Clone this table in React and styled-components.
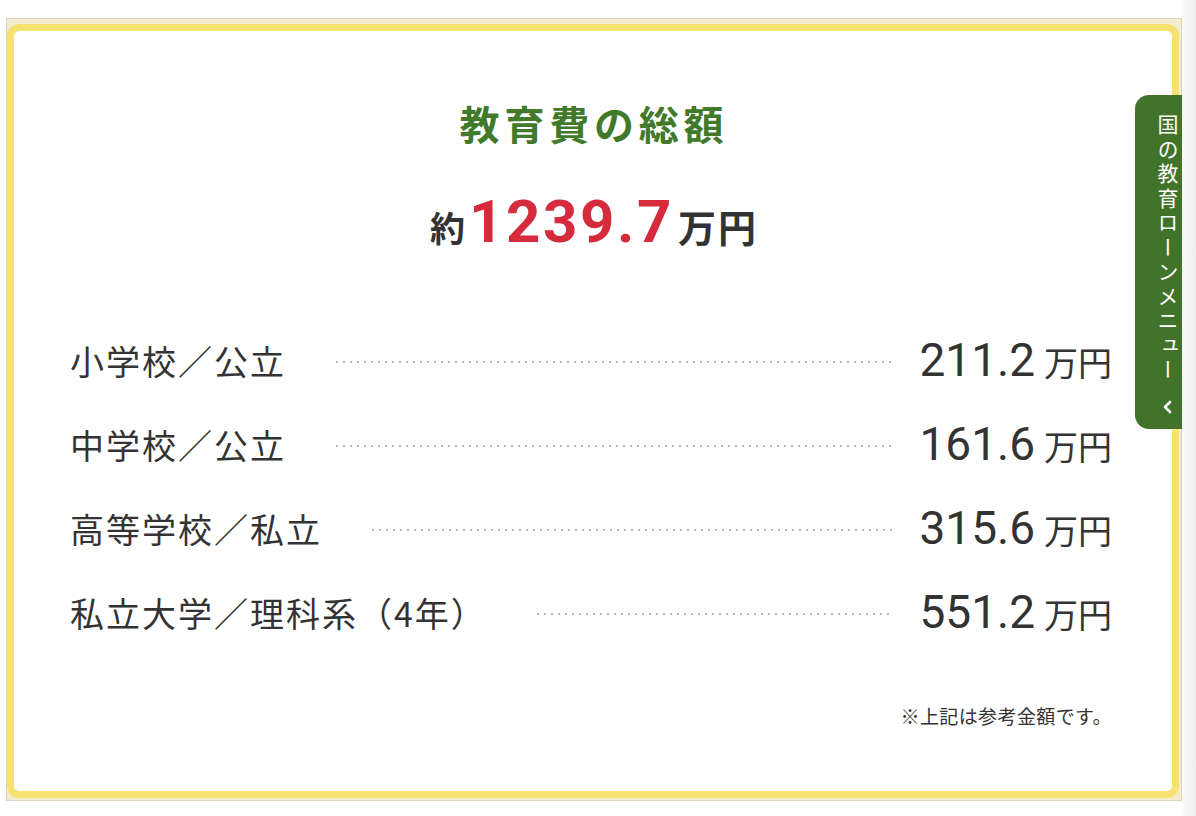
import styled, { createGlobalStyle } from 'styled-components';

const GlobalStyle = createGlobalStyle`
  body {
    margin: 0;
    background: #fff;
    font-family: "Noto Sans CJK JP", "Noto Sans", sans-serif;
    color: #333;
  }
`;

const Page = styled.div`
  display: flex;
  height: 816px;
  position: relative;
  overflow: hidden;
`;

const Main = styled.div`
  flex: 1;
  padding: 18px 0 0 6px;
`;

const Shade = styled.div`
  width: 14px;
  background: linear-gradient(to right, #fbfbfb, #ececec);
`;

const Frame = styled.div`
  box-sizing: border-box;
  width: 1176px;
  height: 783px;
  border: 1px solid #dcd3bb;
  background: #f4ecce;
  padding: 5px 2px 2px 0;
`;

const Card = styled.div`
  box-sizing: border-box;
  height: 100%;
  border: 7px solid #f7e170;
  border-radius: 12px;
  background: #fff;
  padding: 72px 60px 0 56px;
`;

const Title = styled.h2`
  margin: 0;
  padding-left: 6px;
  text-align: center;
  font-size: 40px;
  line-height: 1;
  font-weight: 700;
  letter-spacing: 0.12em;
  color: #417a2b;
`;

const Total = styled.div`
  margin-top: 49px;
  padding-left: 6px;
  display: flex;
  justify-content: center;
  align-items: baseline;
  line-height: 1;
  font-weight: 700;
  color: #333;
`;

const TotalUnit = styled.span`
  font-size: ${(p) => p.$size || 35}px;
  letter-spacing: 2px;
`;

const TotalNumber = styled.span`
  font-family: Roboto, "Liberation Sans", sans-serif;
  font-size: 60px;
  letter-spacing: 2.6px;
  color: #d52b3c;
  margin: 0 4px 0 2px;
`;

const List = styled.div`
  margin-top: 66px;
  display: flex;
  flex-direction: column;
`;

const Row = styled.div`
  height: 84px;
  display: flex;
  align-items: center;
`;

const Label = styled.span`
  font-size: 34px;
  letter-spacing: 2px;
  color: #333;
  white-space: nowrap;
`;

const Dots = styled.span`
  flex: 1;
  height: 2px;
  margin: 4px 27px 0 50px;
  background: repeating-linear-gradient(
    to right,
    #b8b8b8 0 2px,
    transparent 2px 7px
  );
`;

const Value = styled.span`
  display: flex;
  align-items: baseline;
  white-space: nowrap;
`;

const Amount = styled.span`
  font-family: Roboto, "Liberation Sans", sans-serif;
  font-size: 46px;
  color: #333;
`;

const Unit = styled.span`
  font-size: 34px;
  margin-left: 9px;
  color: #333;
`;

const Note = styled.p`
  margin: 48px 0 0;
  text-align: right;
  font-size: 19px;
  letter-spacing: 0.4px;
  color: #333;
`;

const Tab = styled.div`
  position: absolute;
  top: 95px;
  right: 14px;
  box-sizing: border-box;
  width: 47px;
  height: 334px;
  padding: 19px 0 0 22px;
  background: #41732b;
  border-radius: 14px 0 0 14px;
  display: flex;
  flex-direction: column;
  align-items: flex-start;
`;

const TabText = styled.span`
  writing-mode: vertical-rl;
  font-size: 21px;
  letter-spacing: 3.5px;
  line-height: 1;
  color: #fff;
`;

const rows = [
  { label: '小学校／公立', value: '211.2' },
  { label: '中学校／公立', value: '161.6' },
  { label: '高等学校／私立', value: '315.6' },
  { label: '私立大学／理科系（4年）', value: '551.2' },
];

export default function App() {
  return (
    <Page>
      <GlobalStyle />
      <Main>
        <Frame>
          <Card>
            <Title>教育費の総額</Title>
            <Total>
              <TotalUnit>約</TotalUnit>
              <TotalNumber>1239.7</TotalNumber>
              <TotalUnit $size={38}>万円</TotalUnit>
            </Total>
            <List>
              {rows.map((r) => (
                <Row key={r.label}>
                  <Label>{r.label}</Label>
                  <Dots />
                  <Value>
                    <Amount>{r.value}</Amount>
                    <Unit>万円</Unit>
                  </Value>
                </Row>
              ))}
            </List>
            <Note>※上記は参考金額です。</Note>
          </Card>
        </Frame>
      </Main>
      <Shade />
      <Tab>
        <TabText>国の教育ローンメニュー</TabText>
        <svg width="14" height="14" viewBox="0 0 14 14" style={{ marginTop: 16, marginLeft: 4 }}>
          <path d="M9 2 L4 7 L9 12" fill="none" stroke="#fff" strokeWidth="2.6" strokeLinecap="round" strokeLinejoin="round" />
        </svg>
      </Tab>
    </Page>
  );
}
